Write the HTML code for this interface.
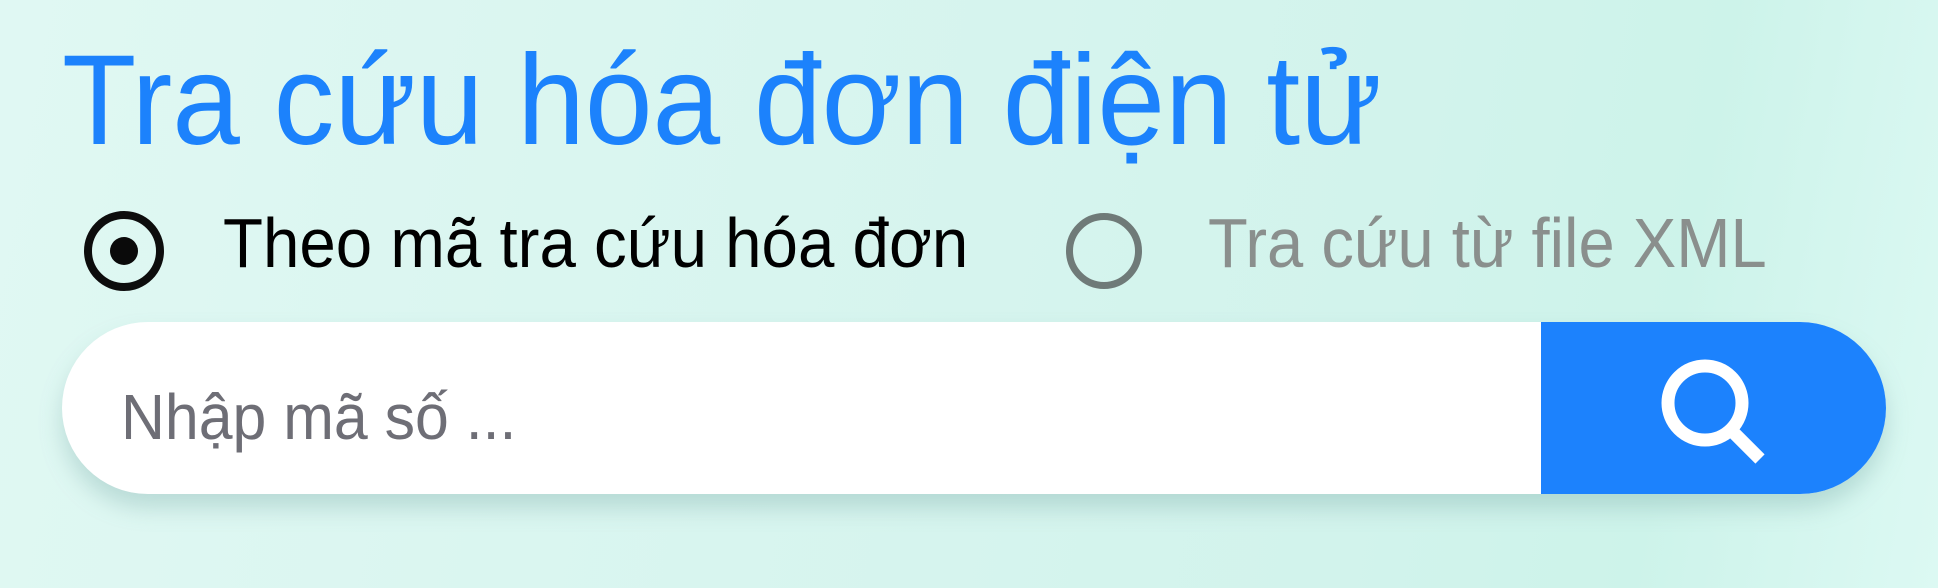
<!DOCTYPE html>
<html><head><meta charset="utf-8"><style>
html,body{margin:0;padding:0;}
body{width:1938px;height:588px;overflow:hidden;position:relative;
background:linear-gradient(100deg,#e0f8f3 0%,#d8f5ef 40%,#d2f3ec 70%,#cdf3ea 85%,#dcf9f3 100%);
font-family:"Liberation Sans",Arial,sans-serif;}
.t{position:absolute;white-space:nowrap;transform-origin:0 0;line-height:1;}
#title{left:62px;top:37px;font-size:128px;color:#1c82fc;transform:scaleX(0.95);}
#l1{left:223px;top:208px;font-size:70px;color:#000;transform:scaleX(0.935);}
#l2{left:1208px;top:208px;font-size:70px;color:#8a8f8d;transform:scaleX(0.93);}
.radio{position:absolute;border-radius:50%;box-sizing:border-box;}
#r2{width:76px;height:76px;top:213px;border:7px solid #6f7a78;left:1066px;}
#r1{width:80px;height:80px;left:84px;top:211px;border:8px solid #0d0d0d;}
#r1::after{content:"";position:absolute;left:18px;top:18px;width:28px;height:28px;border-radius:50%;background:#0a0a0a;}
#box{position:absolute;left:62px;top:322px;width:1824px;height:172px;border-radius:86px;background:#fff;overflow:hidden;
box-shadow:0 14px 22px rgba(120,170,165,0.35);}
#btn{position:absolute;left:1479px;top:0;width:345px;height:172px;background:#1c82fd;}
#ph{left:121px;top:385px;font-size:64px;color:#6e6e76;transform:scaleX(0.95);}
</style></head><body>
<div class="t" id="title">Tra cứu hóa đơn điện tử</div>
<div class="radio" id="r1"></div>
<div class="t" id="l1">Theo mã tra cứu hóa đơn</div>
<div class="radio" id="r2"></div>
<div class="t" id="l2">Tra cứu từ file XML</div>
<div id="box"><div id="btn">
<svg width="345" height="172" viewBox="0 0 345 172" style="position:absolute;left:0;top:0">
<circle cx="164" cy="81" r="37" fill="none" stroke="#fff" stroke-width="13"/>
<line x1="190" y1="108" x2="219" y2="137" stroke="#fff" stroke-width="13" stroke-linecap="butt"/>
</svg></div></div>
<div class="t" id="ph">Nhập mã số ...</div>
</body></html>
